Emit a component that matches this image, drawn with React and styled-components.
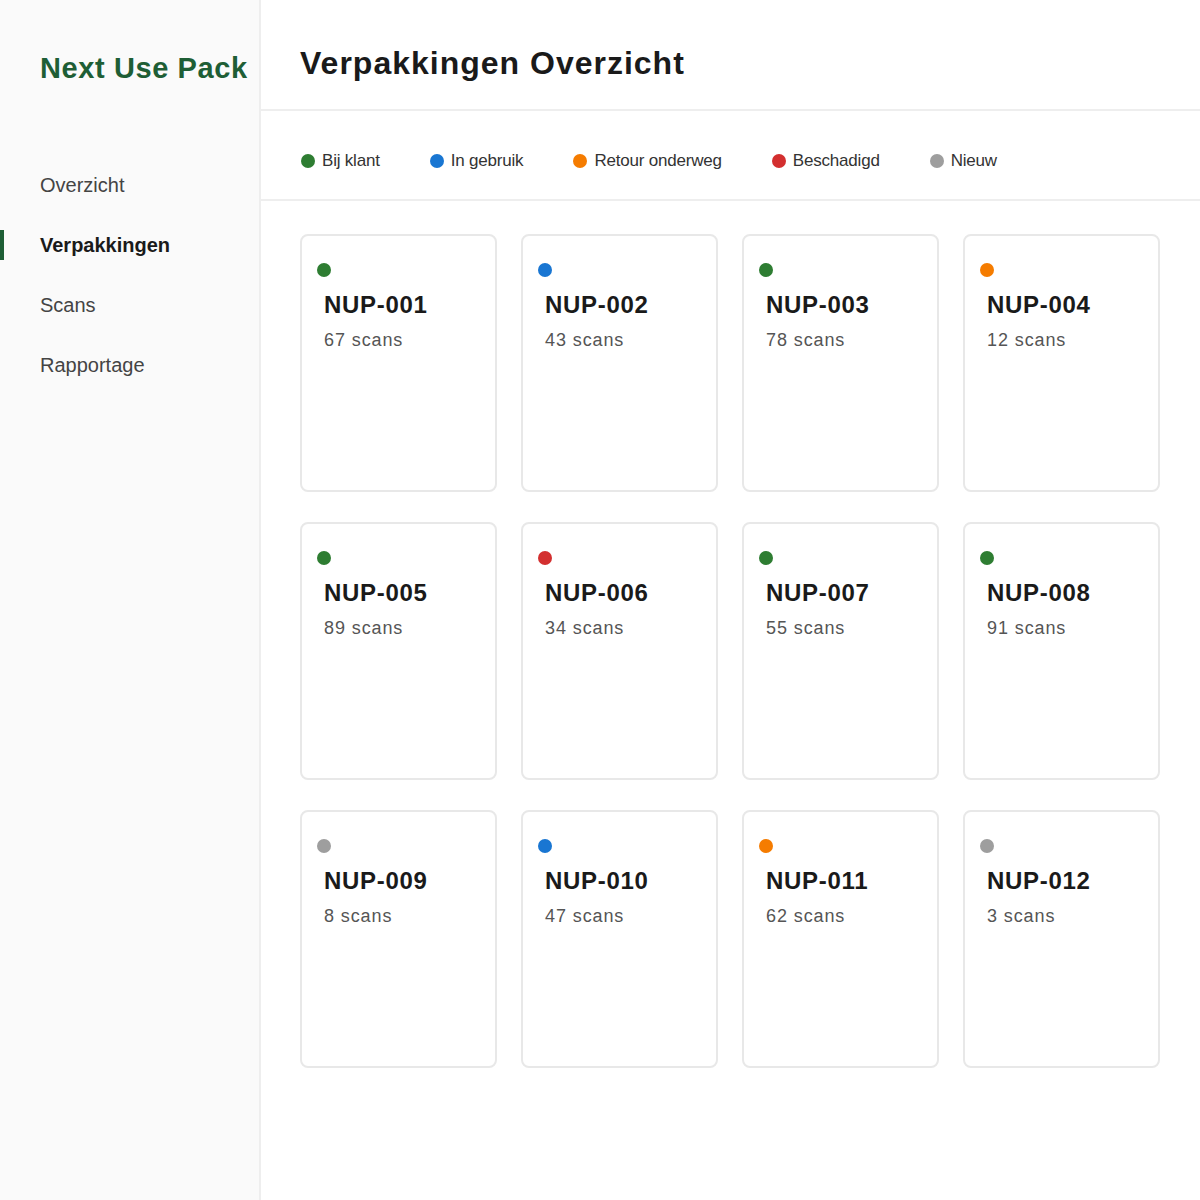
import React from "react";
import styled, { createGlobalStyle } from "styled-components";

const GlobalStyle = createGlobalStyle`
  html, body {
    margin: 0;
    padding: 0;
    background: #fff;
    font-family: "Liberation Sans", Arial, sans-serif;
  }
  * {
    box-sizing: border-box;
  }
`;

const statusColors = {
  klant: "#2e7d32",
  gebruik: "#1976d2",
  retour: "#f57c00",
  beschadigd: "#d32f2f",
  nieuw: "#9e9e9e",
};

const legend = [
  { key: "klant", label: "Bij klant" },
  { key: "gebruik", label: "In gebruik" },
  { key: "retour", label: "Retour onderweg" },
  { key: "beschadigd", label: "Beschadigd" },
  { key: "nieuw", label: "Nieuw" },
];

const packages = [
  { id: "NUP-001", scans: 67, status: "klant" },
  { id: "NUP-002", scans: 43, status: "gebruik" },
  { id: "NUP-003", scans: 78, status: "klant" },
  { id: "NUP-004", scans: 12, status: "retour" },
  { id: "NUP-005", scans: 89, status: "klant" },
  { id: "NUP-006", scans: 34, status: "beschadigd" },
  { id: "NUP-007", scans: 55, status: "klant" },
  { id: "NUP-008", scans: 91, status: "klant" },
  { id: "NUP-009", scans: 8, status: "nieuw" },
  { id: "NUP-010", scans: 47, status: "gebruik" },
  { id: "NUP-011", scans: 62, status: "retour" },
  { id: "NUP-012", scans: 3, status: "nieuw" },
];

const navItems = ["Overzicht", "Verpakkingen", "Scans", "Rapportage"];

const App = () => {
  return (
    <>
      <GlobalStyle />
      <Layout>
        <Sidebar>
          <Logo>Next Use Pack</Logo>
          <Nav>
            {navItems.map((item) => (
              <NavItem key={item} $active={item === "Verpakkingen"}>
                {item}
              </NavItem>
            ))}
          </Nav>
        </Sidebar>

        <Main>
          <Header>
            <Title>Verpakkingen Overzicht</Title>
          </Header>

          <Legend>
            {legend.map((item) => (
              <LegendItem key={item.key}>
                <Dot $color={statusColors[item.key]} />
                {item.label}
              </LegendItem>
            ))}
          </Legend>

          <CardGrid>
            {packages.map((pack) => (
              <Card key={pack.id}>
                <Dot $color={statusColors[pack.status]} />
                <CardTitle>{pack.id}</CardTitle>
                <CardScans>{pack.scans} scans</CardScans>
              </Card>
            ))}
          </CardGrid>
        </Main>
      </Layout>
    </>
  );
};

const Layout = styled.div`
  display: flex;
  min-height: 1200px;
`;

const Sidebar = styled.aside`
  width: 261px;
  flex-shrink: 0;
  background: #fafafa;
  border-right: 2px solid #eeeeee;
  padding-top: 50px;
`;

const Logo = styled.h1`
  margin: 0 0 0 40px;
  font-size: 29px;
  line-height: 36px;
  font-weight: 700;
  letter-spacing: 0.6px;
  color: #1e5e35;
  white-space: nowrap;
`;

const Nav = styled.nav`
  display: flex;
  flex-direction: column;
  margin-top: 69px;
`;

const NavItem = styled.div`
  position: relative;
  height: 60px;
  display: flex;
  align-items: center;
  padding-left: 40px;
  font-size: 20px;
  font-weight: ${(p) => (p.$active ? 700 : 400)};
  color: ${(p) => (p.$active ? "#1a1a1a" : "#444")};

  &::before {
    content: "";
    display: ${(p) => (p.$active ? "block" : "none")};
    position: absolute;
    left: 0;
    top: 15px;
    width: 4px;
    height: 30px;
    background: #1e5e35;
  }
`;

const Main = styled.main`
  flex: 1;
  min-width: 0;
`;

const Header = styled.header`
  height: 111px;
  display: flex;
  align-items: center;
  padding: 18px 39px 0;
  border-bottom: 2px solid #eeeeee;
`;

const Title = styled.h2`
  margin: 0;
  font-size: 32px;
  font-weight: 700;
  letter-spacing: 1px;
  color: #1a1a1a;
`;

const Legend = styled.div`
  height: 90px;
  display: flex;
  align-items: center;
  gap: 50px;
  padding: 11px 39px 0 40px;
  border-bottom: 2px solid #eeeeee;
`;

const LegendItem = styled.div`
  display: flex;
  align-items: center;
  gap: 7px;
  font-size: 17px;
  letter-spacing: -0.2px;
  color: #333;
`;

const Dot = styled.span`
  display: block;
  width: 14px;
  height: 14px;
  border-radius: 50%;
  background: ${(p) => p.$color};
  flex-shrink: 0;
`;

const CardGrid = styled.div`
  display: grid;
  grid-template-columns: repeat(4, 197px);
  column-gap: 24px;
  row-gap: 30px;
  padding: 33px 39px 0;
`;

const Card = styled.div`
  height: 258px;
  border: 2px solid #e8e8e8;
  border-radius: 8px;
  background: #fff;
  padding: 27px 15px;

  ${Dot} {
    margin-bottom: 13px;
  }
`;

const CardTitle = styled.div`
  margin-left: 7px;
  font-size: 24px;
  line-height: 30px;
  font-weight: 700;
  letter-spacing: 0.7px;
  color: #1a1a1a;
`;

const CardScans = styled.div`
  margin: 9px 0 0 7px;
  font-size: 18px;
  line-height: 22px;
  letter-spacing: 0.9px;
  color: #555;
`;

export default App;
